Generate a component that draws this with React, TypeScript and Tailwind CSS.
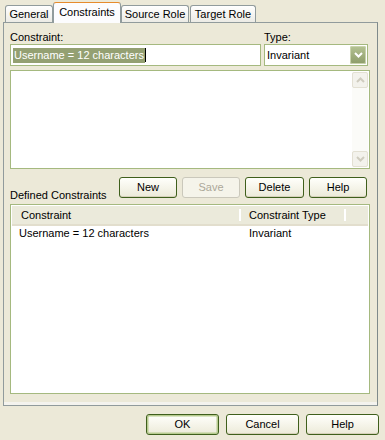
import React from "react";

const font = { fontFamily: '"Liberation Sans", Arial, sans-serif' };

function XpButton({
  label,
  width,
  disabled,
  isDefault,
}: {
  label: string;
  width: string;
  disabled?: boolean;
  isDefault?: boolean;
}) {
  if (disabled) {
    return (
      <div
        className={`${width} flex h-[21px] items-center justify-center rounded-[3px] border border-[#CAC8BB] bg-[#F5F4EA] text-[11px] text-[#ACA899]`}
      >
        {label}
      </div>
    );
  }
  return (
    <div
      className={`${width} flex h-[21px] items-center justify-center rounded-[3px] border border-[#3F5F1C] bg-gradient-to-b from-[#FFFFFB] to-[#ECEAD9] text-[11px] text-black ${
        isDefault ? "shadow-[inset_0_0_0_1.5px_#B7CB8F]" : "shadow-[inset_0_-1px_0_#D6D1BB]"
      }`}
    >
      {label}
    </div>
  );
}

function Tab({ label, active, width }: { label: string; active?: boolean; width: string }) {
  if (active) {
    return (
      <div
        className={`${width} relative z-10 -mb-px flex h-[21px] items-center justify-center rounded-t-[3px] border border-b-0 border-[#919B9C] border-t-[#E68B2C] bg-[#FCFCFE] pb-[2px] text-[11px]`}
      >
        {label}
      </div>
    );
  }
  return (
    <div
      className={`${width} flex h-[17px] items-center justify-center rounded-t-[3px] border border-b-0 border-[#919B9C] bg-gradient-to-b from-[#FFFFFF] to-[#ECEBE5] pt-[1px] text-[11px]`}
    >
      {label}
    </div>
  );
}

function Chevron({ down, color }: { down?: boolean; color: string }) {
  return (
    <svg width="9" height="6" viewBox="0 0 9 6">
      <path
        d={down ? "M1 1 L4.5 4.5 L8 1" : "M1 5 L4.5 1.5 L8 5"}
        fill="none"
        stroke={color}
        strokeWidth="2"
      />
    </svg>
  );
}

export default function App() {
  return (
    <div className="h-[440px] w-[385px] overflow-hidden bg-[#ECE9D8] pt-[2px] text-black" style={font}>
      <div className="flex h-[20px] items-end pl-[5px]">
        <Tab label="General" width="w-[48px]" />
        <Tab label="Constraints" active width="w-[68px]" />
        <Tab label="Source Role" width="w-[68px]" />
        <div className="w-[1px]" />
        <Tab label="Target Role" width="w-[66px]" />
      </div>

      <div className="ml-[3px] flex h-[384px] w-[375px] flex-col border border-[#919B9C] border-r-[#7F8A8B] bg-[#ECE9D8] px-[6px] shadow-[inset_0_-3px_0_#F4F3EE]">
        <div className="mt-[8px] flex h-[13px] text-[11px] leading-[13px]">
          <div className="w-[254px]">Constraint:</div>
          <div>Type:</div>
        </div>

        <div className="flex gap-[3px]">
          <div className="flex h-[22px] w-[251px] items-center border border-[#A5B97F] bg-white px-[2px]">
            <span className="bg-[#94A072] px-[1px] text-[11px] leading-[15px] text-white">Username = 12 characters</span>
            <span className="h-[14px] w-px bg-black" />
          </div>
          <div className="flex h-[22px] w-[104px] items-center justify-between border border-[#A5B97F] bg-white pl-[2px] pr-px">
            <span className="text-[11px]">Invariant</span>
            <div className="flex h-[18px] w-[16px] items-center justify-center rounded-[2px] bg-gradient-to-b from-[#B5C393] to-[#8D9C69] shadow-[inset_0_0_0_1px_#C9D3AD]">
              <Chevron down color="#FFFFFF" />
            </div>
          </div>
        </div>

        <div className="mt-[4px] flex h-[99px] w-[360px] justify-end border border-[#A5B97F] bg-white p-px">
          <div className="flex w-[16px] flex-col justify-between bg-[#FBFBF8]">
            <div className="flex h-[16px] items-center justify-center rounded-[2px] border border-[#E3E0D3] bg-[#F3F2EC]">
              <Chevron color="#CFCCBF" />
            </div>
            <div className="flex h-[16px] items-center justify-center rounded-[2px] border border-[#E3E0D3] bg-[#F3F2EC]">
              <Chevron down color="#CFCCBF" />
            </div>
          </div>
        </div>

        <div className="mt-[8px] flex items-end">
          <div className="-mb-[4px] w-[109px] text-[11px] leading-[13px]">Defined Constraints</div>
          <div className="flex gap-[5px]">
            <XpButton label="New" width="w-[58px]" />
            <XpButton label="Save" width="w-[58px]" disabled />
            <XpButton label="Delete" width="w-[59px]" />
            <XpButton label="Help" width="w-[58px]" />
          </div>
        </div>

        <div className="mt-[6px] flex h-[190px] w-[360px] flex-col border border-[#A5B97F] bg-white p-px">
          <div className="flex h-[20px] border-b-2 border-[#E2DECD] bg-[#EBEADB] text-[11px]">
            <div className="my-[3px] flex w-[229px] items-center border-r-2 border-[#FFFFFF] pl-[9px]">Constraint</div>
            <div className="my-[3px] flex w-[105px] items-center border-r-2 border-[#FFFFFF] pl-[8px]">Constraint Type</div>
          </div>
          <div className="flex h-[15px] items-center text-[11px]">
            <div className="w-[231px] pl-[7px]">Username = 12 characters</div>
            <div className="pl-[6px]">Invariant</div>
          </div>
        </div>
      </div>

      <div className="mt-[8px] flex justify-end gap-[7px] pr-[6px]">
        <XpButton label="OK" width="w-[73px]" isDefault />
        <XpButton label="Cancel" width="w-[73px]" />
        <XpButton label="Help" width="w-[73px]" />
      </div>
    </div>
  );
}
